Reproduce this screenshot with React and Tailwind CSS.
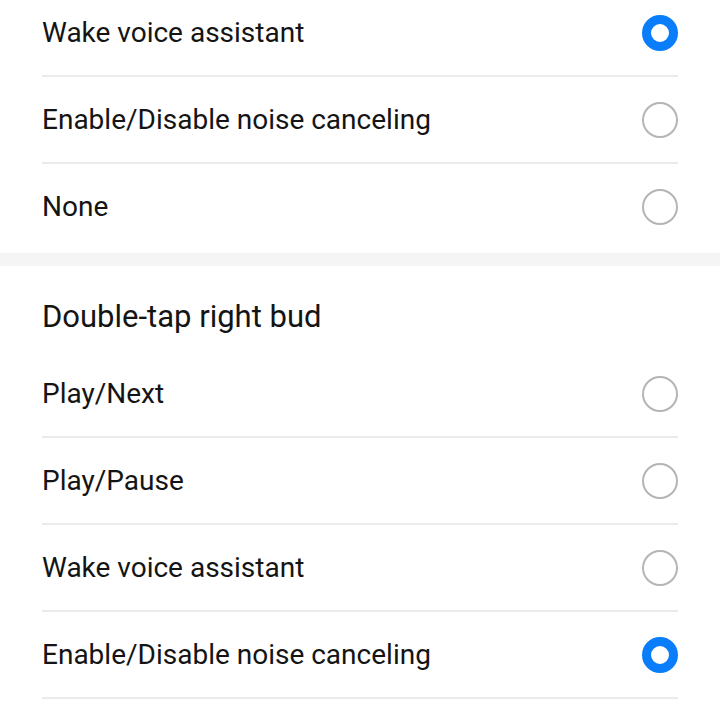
import React, { useState } from "react";

const Radio = ({ checked }) =>
    checked ? (
        <span className="w-[36px] h-[36px] rounded-full border-[9px] border-[#0a7dfb] bg-white shrink-0" />
    ) : (
        <span className="w-[36px] h-[36px] rounded-full border-2 border-[#b5b5b5] bg-white shrink-0" />
    );

const Row = ({ label, checked, divider, onClick }) => (
    <div onClick={onClick} className="flex flex-col">
        <div className="h-[85px] flex items-center justify-between">
            <span className="text-[28px] text-[#141414]">{label}</span>
            <Radio checked={checked} />
        </div>
        {divider && <div className="h-[2px] bg-[#ebebeb]" />}
    </div>
);

export default function App() {
    const [left, setLeft] = useState(0);
    const [right, setRight] = useState(3);

    const leftOptions = ["Wake voice assistant", "Enable/Disable noise canceling", "None"];
    const rightOptions = ["Play/Next", "Play/Pause", "Wake voice assistant", "Enable/Disable noise canceling"];

    return (
        <div className="w-[720px] h-[720px] overflow-hidden bg-white" style={{ fontFamily: "Roboto, 'Noto Sans', sans-serif" }}>
            <div className="mt-[-10px] px-[42px]">
                {leftOptions.map((o, i) => (
                    <Row key={o} label={o} checked={left === i} divider={i < leftOptions.length - 1} onClick={() => setLeft(i)} />
                ))}
            </div>
            <div className="h-[13px] bg-[#f5f5f5] mt-[4px]" />
            <div className="px-[42px]">
                <div className="pt-[33px] pb-[16px] text-[31px] text-[#141414] leading-[36px]">Double-tap right bud</div>
                {rightOptions.map((o, i) => (
                    <Row key={o} label={o} checked={right === i} divider onClick={() => setRight(i)} />
                ))}
            </div>
        </div>
    );
}
